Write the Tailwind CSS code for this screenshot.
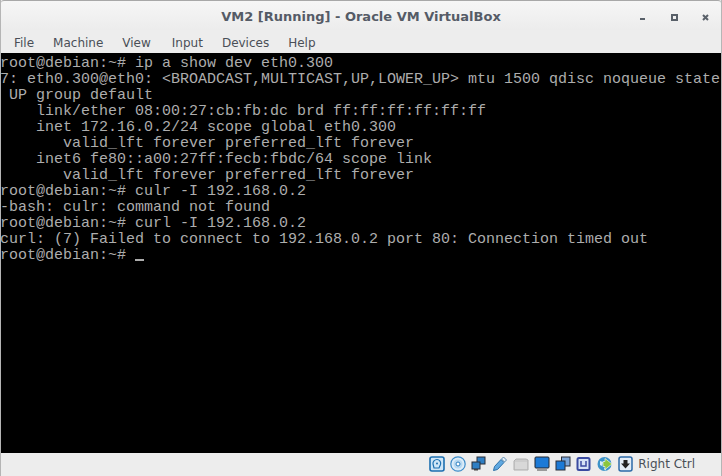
<!DOCTYPE html>
<html lang="en">
<head>
  <meta charset="UTF-8" />
  <title>VM2 [Running] - Oracle VM VirtualBox</title>
  <script src="https://cdn.jsdelivr.net/npm/@tailwindcss/browser@4"></script>
</head>
<body class="bg-[#f0f0f0]">
  <div class="w-[722px] h-[476px] flex flex-col overflow-hidden bg-[#ededed] font-['DejaVu_Sans',sans-serif] border-x border-[#b5b5b5]">
    <!-- title bar -->
    <div class="h-[30px] shrink-0 flex items-center justify-center pt-[2px] relative bg-gradient-to-b from-[#f6f6f6] to-[#ececec] border-t border-[#a8a8a8] rounded-t-[3px]">
      <span class="text-[13px] font-bold text-[#555b66]">VM2 [Running] - Oracle VM VirtualBox</span>
      <div class="absolute right-[12px] top-[13px] flex items-center gap-[24px]">
        <svg width="7" height="7" viewBox="0 0 7 7"><rect x="0" y="4" width="5" height="2" fill="#596069"/></svg>
        <svg width="7" height="7" viewBox="0 0 7 7"><rect x="1" y="1" width="5" height="5" fill="none" stroke="#596069" stroke-width="2"/></svg>
        <svg width="7" height="7" viewBox="0 0 7 7"><path d="M1 1l5 5M6 1l-5 5" stroke="#596069" stroke-width="2"/></svg>
      </div>
    </div>
    <!-- menu bar -->
    <div class="h-[23px] shrink-0 flex items-center pl-[13px] pt-[3px] gap-[19px] text-[12px] text-[#4a4f57] bg-[#ededed]">
      <span>File</span><span>Machine</span><span class="mr-[2px]">View</span><span>Input</span><span>Devices</span><span>Help</span>
    </div>
    <!-- console -->
    <pre class="h-[400px] shrink-0 -ml-px pt-[3px] bg-black text-[#adadad] font-['Liberation_Mono',monospace] text-[15px] leading-[16px] overflow-hidden">root@debian:~# ip a show dev eth0.300
7: eth0.300@eth0: &lt;BROADCAST,MULTICAST,UP,LOWER_UP&gt; mtu 1500 qdisc noqueue state
 UP group default
    link/ether 08:00:27:cb:fb:dc brd ff:ff:ff:ff:ff:ff
    inet 172.16.0.2/24 scope global eth0.300
       valid_lft forever preferred_lft forever
    inet6 fe80::a00:27ff:fecb:fbdc/64 scope link
       valid_lft forever preferred_lft forever
root@debian:~# culr -I 192.168.0.2
-bash: culr: command not found
root@debian:~# curl -I 192.168.0.2
curl: (7) Failed to connect to 192.168.0.2 port 80: Connection timed out
root@debian:~# <span class="inline-block w-[9px] h-[2px] bg-[#adadad] align-[-2px]"></span></pre>
    <!-- status bar -->
    <div class="flex-1 flex items-center justify-end gap-[5px] pr-[26px] pb-[2px] bg-[#ededed]">
      <!-- hard disk -->
      <svg width="16" height="16" viewBox="0 0 16 16"><rect x="1" y="1" width="14" height="14" rx="2" fill="#cfe6f7" stroke="#1c6fb0" stroke-width="1.6"/><path d="M8 3.500a3.800 3.800 0 0 1 3.500 5L10 12H5l-1-4a4 4 0 0 1 4-4.500z" fill="none" stroke="#1c6fb0" stroke-width="1.200"/><circle cx="8" cy="7.500" r="1" fill="#1c6fb0"/></svg>
      <!-- optical disc -->
      <svg width="16" height="16" viewBox="0 0 16 16"><circle cx="8" cy="8" r="7.200" fill="#dcecf8" stroke="#3b8bc8" stroke-width="1.200"/><circle cx="8" cy="8" r="4.500" fill="#b7d8f0"/><circle cx="8" cy="8" r="2" fill="#fff" stroke="#2a7fc0"/></svg>
      <!-- shared network -->
      <svg width="16" height="16" viewBox="0 0 16 16"><rect x="6" y="1" width="8" height="7" fill="#2f7fc4" stroke="#2a2f38"/><rect x="1" y="6" width="8" height="7" fill="#2f7fc4" stroke="#2a2f38"/><rect x="3" y="13" width="4" height="1.500" fill="#444"/></svg>
      <!-- usb -->
      <svg width="16" height="16" viewBox="0 0 16 16"><path d="M1.500 14.500l1-4L9 3.500l3 3-6.500 7z" fill="#5fa8e0" stroke="#2a6fa8"/><path d="M9.500 3l2-2 3 3-2 2z" fill="#e8f1f8" stroke="#5a8ab0"/></svg>
      <!-- shared folder -->
      <svg width="16" height="16" viewBox="0 0 16 16"><path d="M1 5l2-2h10l2 1v10H1z" fill="#cdcdcd" stroke="#b0b0b0"/><rect x="2" y="6" width="12" height="7" fill="#d8d8d8"/></svg>
      <!-- display -->
      <svg width="16" height="16" viewBox="0 0 16 16"><rect x="1" y="1" width="14" height="11" rx="1" fill="#1c7ad6" stroke="#20242c"/><rect x="3" y="13" width="10" height="2" fill="#9a9a9a"/></svg>
      <!-- video capture -->
      <svg width="16" height="16" viewBox="0 0 16 16"><rect x="6.500" y="1" width="8.500" height="9" fill="#7aa5d8" stroke="#2a2f38"/><rect x="1" y="5" width="9" height="9" fill="#1c7ad6" stroke="#2a2f38"/></svg>
      <!-- cpu -->
      <svg width="16" height="16" viewBox="0 0 16 16"><rect x="1.500" y="2" width="12" height="12" rx="1.500" fill="#d5e2f6" stroke="#3a4aa0" stroke-width="2"/><path d="M5 5v5h5V5" fill="none" stroke="#3a4aa0" stroke-width="1.500"/></svg>
      <!-- mouse integration globe -->
      <svg width="16" height="16" viewBox="0 0 16 16"><circle cx="7.500" cy="8" r="7" fill="#3d93c9"/><path d="M3 5l3 1-1 4-2-1zM7 12l2 1-1 2z" fill="#d8ecf8"/><path d="M8 2.500l7 5.500-7 5.500V10.500H6v-5h2z" fill="#8cc63f" stroke="#fff" stroke-width=".6"/></svg>
      <!-- host key capture -->
      <svg width="16" height="16" viewBox="0 0 16 16"><rect x="1" y="1" width="13" height="14" rx="2" fill="#e3edf7" stroke="#2c6aa8" stroke-width="1.500"/><path d="M5.500 4h4v3.500H12l-4.500 5-4.500-5h2.500z" fill="#222"/></svg>
      <span class="-ml-px text-[12px] text-[#4a4f57]">Right Ctrl</span>
    </div>
  </div>
</body>
</html>
